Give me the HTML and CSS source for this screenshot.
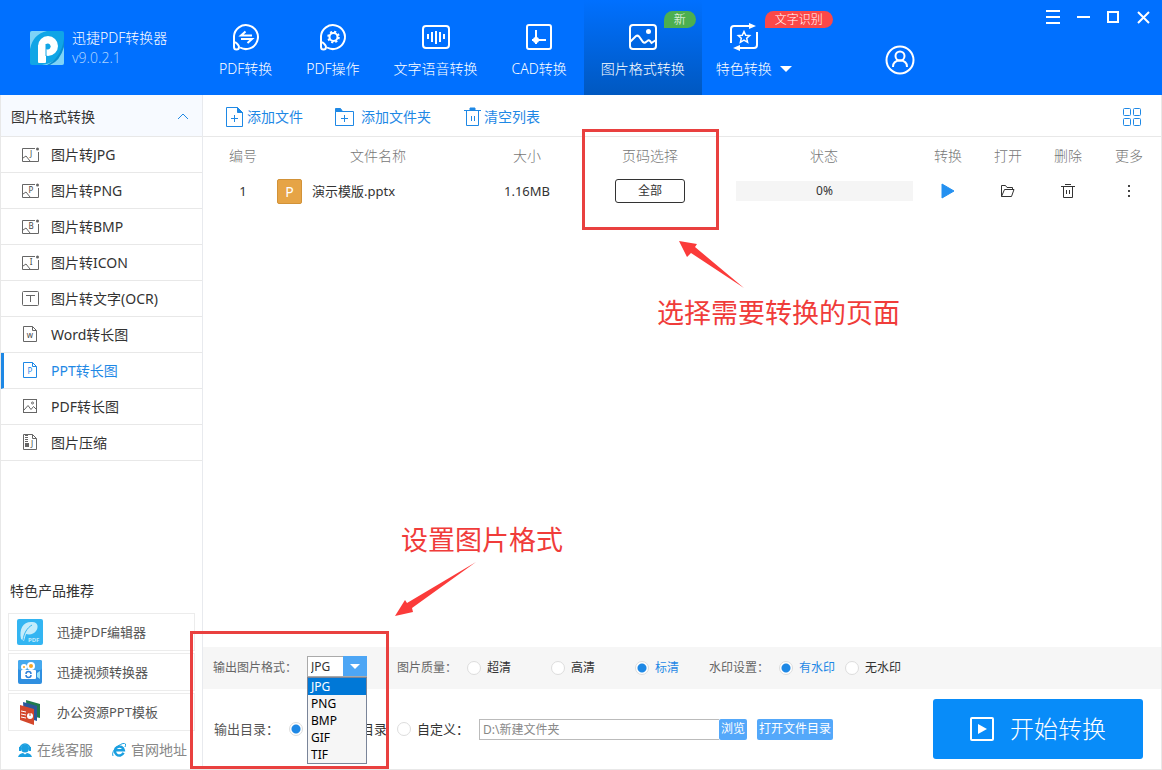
FILE: index.html
```
<!DOCTYPE html>
<html lang="zh-CN">
<head>
    <meta charset="UTF-8">
    <meta name="viewport" content="width=device-width, initial-scale=1.0">
    <title>迅捷PDF转换器</title>
    <link rel="stylesheet" href="styles.css">
</head>
<body>
    <header class="header">
        <div class="brand">
            <svg class="brand-logo" width="34" height="34" viewBox="0 0 34 34">
                <rect width="34" height="34" rx="2" fill="#10a5e6"/>
                <path d="M0 18V2Q0 0 2 0H17Q3 3 0 18Z" fill="#7fd3f7"/>
                <path d="M34 12V32Q34 34 32 34H12Q31 31 34 12Z" fill="#7fd3f7"/>
                <path d="M17 34Q31 27 34 8V16Q30 30 20 34Z" fill="#0a8fd0"/>
                <rect x="8" y="14" width="8" height="18" rx="1" fill="#fff"/>
                <circle cx="18" cy="15" r="10" fill="#fff"/>
                <path d="M16 13a3 3 0 1 1 0 5Z" fill="#10a5e6"/>
                <path d="M16 13V25" stroke="#10a5e6" stroke-width="1"/>
            </svg>
            <div>
                <h1 class="brand-name">迅捷PDF转换器</h1>
                <p class="brand-version">v9.0.2.1</p>
            </div>
        </div>

        <nav class="nav">
            <a class="nav-item" href="#">
                <svg class="nav-icon" viewBox="0 0 30 30">
                    <path d="M3 22V14A12 12 0 1 1 9 25.500"/>
                    <path d="M3 16V25a2.500 2.500 0 0 0 5 0Q8 23 4 20"/>
                    <path d="M21 13.500H10L14.500 9.500M10 17H21L16.500 21"/>
                </svg>
                <span>PDF转换</span>
            </a>
            <a class="nav-item" href="#">
                <svg class="nav-icon" viewBox="0 0 30 30">
                    <path d="M3 22V14A12 12 0 1 1 9 25.500"/>
                    <path d="M3 16V25a2.500 2.500 0 0 0 5 0Q8 23 4 20"/>
                    <circle cx="15.500" cy="15" r="4"/>
                    <circle cx="15.500" cy="15" r="5.300" stroke-dasharray="2.100 2.060"/>
                </svg>
                <span>PDF操作</span>
            </a>
            <a class="nav-item" href="#">
                <svg class="nav-icon" viewBox="0 0 30 30">
                    <rect x="2" y="4" width="26" height="22" rx="3"/>
                    <path d="M7 12V17M11 10V20M15 9V22M19 10V20M23 12V17"/>
                </svg>
                <span>文字语音转换</span>
            </a>
            <a class="nav-item" href="#">
                <svg class="nav-icon" viewBox="0 0 30 30">
                    <rect x="3" y="3" width="24" height="24" rx="2"/>
                    <path d="M12 8V22M8 18H22"/>
                    <circle cx="12" cy="18" r="2" fill="currentColor"/>
                </svg>
                <span>CAD转换</span>
            </a>
            <a class="nav-item active" href="#">
                <svg class="nav-icon" viewBox="0 0 30 30">
                    <rect x="2" y="3" width="26" height="24" rx="3"/>
                    <path d="M2 20L8 14Q9.500 13 11 14.500L15 20Q16.500 21.500 18 20L20 18.500Q21 18 22 19L23.500 21L28 18"/>
                    <circle cx="20.500" cy="9.500" r="2.500" fill="currentColor" stroke="none"/>
                </svg>
                <span>图片格式转换</span>
                <em class="badge badge-new">新</em>
            </a>
            <a class="nav-item nav-more" href="#">
                <svg class="nav-icon" viewBox="0 0 30 30">
                    <path d="M2 21V7Q2 4 5 4H22M28 10V23Q28 26 25 26H8"/>
                    <path d="M20 1L27 4L20 7ZM11 23L4 26L11 29Z" fill="currentColor" stroke="none"/>
                    <path d="M15 9.500L16.700 13.200L20.700 13.600L17.700 16.300L18.600 20.300L15 18.200L11.400 20.300L12.300 16.300L9.300 13.600L13.300 13.200Z" stroke-width="1.500"/>
                </svg>
                <span class="nav-label">特色转换</span>
                <svg class="nav-caret" width="12" height="6" viewBox="0 0 12 6"><path d="M0 0H12L6 6Z" fill="currentColor"/></svg>
                <em class="badge badge-ocr">文字识别</em>
            </a>
        </nav>

        <button class="user-btn" type="button" aria-label="用户">
            <svg width="30" height="30" viewBox="0 0 30 30">
                <circle cx="15" cy="15" r="13.500"/>
                <circle cx="15" cy="11" r="4.500"/>
                <path d="M8 22Q8 15.500 15 15.500T22 22"/>
            </svg>
        </button>

        <div class="window-controls">
            <button type="button" aria-label="菜单"><svg viewBox="0 0 14 14"><path d="M0 1H14M0 7H14M0 13H14"/></svg></button>
            <button type="button" aria-label="最小化"><svg viewBox="0 0 14 14"><path d="M1 7H14"/></svg></button>
            <button type="button" aria-label="最大化"><svg viewBox="0 0 14 14"><path d="M2 2H12V12H2Z"/></svg></button>
            <button type="button" aria-label="关闭"><svg viewBox="0 0 14 14"><path d="M2 2L13 13M13 2L2 13"/></svg></button>
        </div>
    </header>

    <div class="layout">
        <aside class="sidebar">
            <button class="menu-title" type="button">
                <span>图片格式转换</span>
                <svg width="12" height="8" viewBox="0 0 12 8"><path d="M1 6L6 1L11 6" fill="none" stroke="#1e88e5"/></svg>
            </button>
            <nav class="menu">
                <a class="menu-item" href="#">
                    <svg class="menu-icon" viewBox="0 0 18 18"><path d="M13 2.500H.5V15.500H16.500V6M1 12L4 10L8 15"/><circle cx="15.500" cy="3" r="1.500" class="dot"/><text x="9" y="11">J</text></svg>
                    图片转JPG
                </a>
                <a class="menu-item" href="#">
                    <svg class="menu-icon" viewBox="0 0 18 18"><path d="M13 2.500H.5V15.500H16.500V6M1 12L4 10L8 15"/><circle cx="15.500" cy="3" r="1.500" class="dot"/><text x="9" y="11">P</text></svg>
                    图片转PNG
                </a>
                <a class="menu-item" href="#">
                    <svg class="menu-icon" viewBox="0 0 18 18"><path d="M13 2.500H.5V15.500H16.500V6M1 12L4 10L8 15"/><circle cx="15.500" cy="3" r="1.500" class="dot"/><text x="9" y="11">B</text></svg>
                    图片转BMP
                </a>
                <a class="menu-item" href="#">
                    <svg class="menu-icon" viewBox="0 0 18 18"><path d="M13 2.500H.5V15.500H16.500V6M1 12L4 10L8 15"/><circle cx="15.500" cy="3" r="1.500" class="dot"/><text x="9" y="11">I</text></svg>
                    图片转ICON
                </a>
                <a class="menu-item" href="#">
                    <svg class="menu-icon" viewBox="0 0 18 18"><rect x=".5" y="1.500" width="16" height="14" rx="1"/><path d="M4 5.500H13M8.500 5.500V12"/></svg>
                    图片转文字(OCR)
                </a>
                <a class="menu-item" href="#">
                    <svg class="menu-icon" viewBox="0 0 18 18"><path d="M1.500.5H10.500L14.500 4.500V15.500H1.500ZM10.500.5V4.500H14.500"/><text x="8" y="12">w</text></svg>
                    Word转长图
                </a>
                <a class="menu-item active" href="#">
                    <svg class="menu-icon" viewBox="0 0 18 18"><path d="M1.500.5H10.500L14.500 4.500V15.500H1.500ZM10.500.5V4.500H14.500"/><text x="8" y="12">P</text></svg>
                    PPT转长图
                </a>
                <a class="menu-item" href="#">
                    <svg class="menu-icon" viewBox="0 0 18 18"><rect x="1.500" y="1.500" width="13" height="13"/><path d="M2 12L6 7.500L9 11.500L11.500 8.500L14 11"/><circle cx="10.500" cy="5" r="1"/></svg>
                    PDF转长图
                </a>
                <a class="menu-item" href="#">
                    <svg class="menu-icon" viewBox="0 0 18 18"><path d="M1.500.5H10.500L14.500 4.500V15.500H1.500ZM10.500.5V4.500H14.500"/><path d="M4.500 1V9" stroke-width="3" stroke-dasharray="1 1"/><rect x="3" y="9" width="4" height="4" class="dot"/><text x="10" y="13">J</text></svg>
                    图片压缩
                </a>
            </nav>

            <section class="products">
                <h2 class="products-title">特色产品推荐</h2>
                <a class="product" href="#">
                    <svg width="26" height="26" viewBox="0 0 26 26">
                        <rect width="26" height="26" rx="2" fill="#33b5f2"/>
                        <path d="M4 20C2 10 6 3 14 3C21 2 22 8 19 12C17 15 13 16 9 15L7 22Z" fill="#c4ecfb"/>
                        <path d="M6 21C7 14 10 9 15 6" fill="none" stroke="#33b5f2"/>
                        <text x="11" y="23" font-size="6" font-weight="bold" fill="#bfe8fb">PDF</text>
                    </svg>
                    迅捷PDF编辑器
                </a>
                <a class="product" href="#">
                    <svg width="26" height="26" viewBox="0 0 26 26">
                        <rect x="1" y="1" width="24" height="24" rx="2" fill="#2f8fe0"/>
                        <rect x="1" y="1" width="24" height="10" rx="2" fill="#45a9ee"/>
                        <circle cx="7" cy="8" r="3" fill="#fff"/><circle cx="14" cy="7" r="4" fill="#fff"/>
                        <circle cx="7" cy="8" r="1" fill="#f5a623"/><circle cx="14" cy="7" r="2" fill="#f5a623"/>
                        <rect x="4" y="11" width="15" height="9" rx="1" fill="#fff"/>
                        <path d="M20 14L23 12V20L20 18Z" fill="#9fe3fa"/>
                        <path d="M9 15A2.500 2.500 0 0 1 14 15M14 16A2.500 2.500 0 0 1 9 16" fill="none" stroke="#2f80d8" stroke-width="1.500"/>
                    </svg>
                    迅捷视频转换器
                </a>
                <a class="product" href="#">
                    <svg width="26" height="26" viewBox="0 0 26 26">
                        <path d="M9 1L23 5V19L10 16Z" fill="#1f7a4d"/>
                        <path d="M6 3L20 7V22L7 18Z" fill="#2b579a"/>
                        <path d="M3 6L17 10V26L3 21Z" fill="#d3472b"/>
                        <path d="M4 12L9 13M4 15L9 16M4 18L9 19" stroke="#fff"/>
                        <circle cx="13" cy="17" r="3" fill="#fff"/>
                        <path d="M13 17V13" stroke="#d3472b"/>
                    </svg>
                    办公资源PPT模板
                </a>
                <div class="support">
                    <a href="#">
                        <svg width="14" height="14" viewBox="0 0 14 14">
                            <circle cx="7" cy="5.500" r="4" fill="#1a9fe0"/>
                            <path d="M2 6A5 5 0 0 1 12 6" fill="none" stroke="#1a9fe0" stroke-width="1.500"/>
                            <rect x="1" y="4" width="2" height="4" fill="#1a9fe0"/><rect x="11" y="4" width="2" height="4" fill="#1a9fe0"/>
                            <path d="M0 14Q1 10.500 5 10L7 11.500L9 10Q13 10.500 14 14Z" fill="#1a9fe0"/>
                        </svg>
                        在线客服
                    </a>
                    <a href="#">
                        <svg width="14" height="14" viewBox="0 0 14 14">
                            <path d="M11.500 9.800A4.500 4.500 0 1 1 11.800 7.300H4" fill="none" stroke="#1a9fe0" stroke-width="2.500"/>
                            <path d="M1 13Q-1 9 6 3Q12-1 13.500 1Q14 2 13 4" fill="none" stroke="#1a9fe0"/>
                        </svg>
                        官网地址
                    </a>
                </div>
            </section>
        </aside>

        <main class="main">
            <div class="toolbar">
                <button class="tool" type="button">
                    <svg width="18" height="20" viewBox="0 0 18 20"><path d="M.5.5H11.500L16.500 5.500V19.500H.5ZM5 11.500H12M8.500 8V15"/><path d="M11.500.5V5.500H16.500Z" fill="currentColor"/></svg>
                    添加文件
                </button>
                <button class="tool tool-folder" type="button">
                    <svg width="19" height="18" viewBox="0 0 19 18"><path d="M.5 3.500H18.500V17.500H.5ZM6 10.500H13M9.500 7V14"/><path d="M.5.5H5.500L7.500 3.500H.5Z" fill="currentColor"/></svg>
                    添加文件夹
                </button>
                <button class="tool" type="button">
                    <svg width="18" height="20" viewBox="0 0 18 20"><path d="M1 3.500H18M3.500 4V18.500H15.500V4M8.500 9V14M11.500 9V14"/><path d="M7 1H12V3H7Z" fill="currentColor"/></svg>
                    清空列表
                </button>
                <button class="tool tool-grid" type="button" aria-label="网格视图">
                    <svg width="18" height="18" viewBox="0 0 18 18"><rect x=".5" y=".5" width="7" height="7" rx="1"/><rect x="10.500" y=".5" width="7" height="7" rx="1"/><rect x=".5" y="10.500" width="7" height="7" rx="1"/><rect x="10.500" y="10.500" width="7" height="7" rx="1"/></svg>
                </button>
            </div>

            <table class="files">
                <thead>
                    <tr>
                        <th class="col-no">编号</th>
                        <th class="col-name">文件名称</th>
                        <th class="col-size">大小</th>
                        <th class="col-pages">页码选择</th>
                        <th class="col-status">状态</th>
                        <th class="col-run">转换</th>
                        <th class="col-open">打开</th>
                        <th class="col-delete">删除</th>
                        <th class="col-more">更多</th>
                    </tr>
                </thead>
                <tbody>
                    <tr>
                        <td class="col-no">1</td>
                        <td class="col-name">
                            <div class="file">
                                <span class="file-type">P</span>
                                <span>演示模版.pptx</span>
                            </div>
                        </td>
                        <td>1.16MB</td>
                        <td class="pages-cell">
                            <button class="pages-btn" type="button">全部</button>
                            <div class="mark mark-pages"></div>
                            <svg class="arrow arrow-pages" width="66" height="48" viewBox="0 0 66 48"><path d="M0 0L18 3L16 6L65 47L12 12L8 16Z"/></svg>
                            <p class="note note-pages">选择需要转换的页面</p>
                        </td>
                        <td><div class="progress">0%</div></td>
                        <td>
                            <button class="row-btn" type="button" aria-label="转换"><svg width="14" height="16" viewBox="0 0 14 16"><path d="M1 1L13 8L1 15Z" fill="#2490f0" stroke="#2490f0" stroke-linejoin="round"/></svg></button>
                        </td>
                        <td>
                            <button class="row-btn" type="button" aria-label="打开"><svg width="16" height="16" viewBox="0 0 16 16"><path d="M1.500 13.500V2.500H5.500L7 4.500H12.500V6.500M1.500 13.500L4.500 6.500H14L11.500 13.500Z"/></svg></button>
                        </td>
                        <td>
                            <button class="row-btn" type="button" aria-label="删除"><svg width="14" height="16" viewBox="0 0 14 16"><path d="M4 1.500H10M0 3.500H14M2.500 4V14.500H11.500V4M5.500 7V11M8.500 7V11"/></svg></button>
                        </td>
                        <td class="col-more">
                            <button class="row-btn" type="button" aria-label="更多"><svg width="4" height="16" viewBox="0 0 4 16"><path d="M1 2H3V4H1ZM1 7H3V9H1ZM1 12H3V14H1Z" fill="#444" stroke="none"/></svg></button>
                        </td>
                    </tr>
                </tbody>
            </table>

            <form class="settings">
                <div class="format-bar">
                    <label for="format">输出图片格式：</label>
                    <div class="dropdown">
                        <select class="dropdown-select" id="format">
                            <option>JPG</option>
                            <option>PNG</option>
                            <option>BMP</option>
                            <option>GIF</option>
                            <option>TIF</option>
                        </select>
                        <svg class="dropdown-arrow" width="24" height="20" viewBox="0 0 24 20"><path d="M7 8H17L12 13Z" fill="#fff"/></svg>
                        <ul class="dropdown-list" role="listbox" aria-label="输出图片格式">
                            <li role="option" aria-selected="true">JPG</li>
                            <li role="option" aria-selected="false">PNG</li>
                            <li role="option" aria-selected="false">BMP</li>
                            <li role="option" aria-selected="false">GIF</li>
                            <li role="option" aria-selected="false">TIF</li>
                        </ul>
                    </div>
                    <div class="group group-quality" role="radiogroup" aria-labelledby="quality-label">
                        <span id="quality-label">图片质量：</span>
                        <div class="options">
                            <label class="radio"><input type="radio" name="quality"><span>超清</span></label>
                            <label class="radio"><input type="radio" name="quality"><span>高清</span></label>
                            <label class="radio"><input type="radio" name="quality" checked><span>标清</span></label>
                        </div>
                    </div>
                    <div class="group" role="radiogroup" aria-labelledby="watermark-label">
                        <span id="watermark-label">水印设置：</span>
                        <label class="radio"><input type="radio" name="watermark" checked><span>有水印</span></label>
                        <label class="radio"><input type="radio" name="watermark"><span>无水印</span></label>
                    </div>
                </div>

                <div class="output-bar">
                    <span>输出目录：</span>
                    <label class="radio radio-plain radio-source"><input type="radio" name="output" checked><span>目录</span></label>
                    <label class="radio radio-plain"><input type="radio" name="output"><span>自定义：</span></label>
                    <div class="path">
                        <input class="path-input" type="text" value="D:\新建文件夹" aria-label="自定义目录">
                        <button class="small-btn" type="button">浏览</button>
                    </div>
                    <button class="small-btn" type="button">打开文件目录</button>
                    <button class="start-btn" type="button">
                        <svg width="24" height="24" viewBox="0 0 24 24"><rect x="1" y="1" width="22" height="22" rx="1" fill="none" stroke="#fff" stroke-width="2"/><path d="M8 7L17 12L8 17Z" fill="#fff"/></svg>
                        开始转换
                    </button>
                </div>

                <div class="mark mark-format"></div>
                <svg class="arrow arrow-format" width="82" height="55" viewBox="0 0 82 55"><path d="M0 54L10 38L12 41L81 0L17 46L18 50Z"/></svg>
                <p class="note note-format">设置图片格式</p>
            </form>
        </main>
    </div>
</body>
</html>
```
FILE: styles.css
```
* {
    margin: 0;
    padding: 0;
    box-sizing: border-box;
}

body {
    display: flex;
    flex-direction: column;
    min-height: 100vh;
    font-family: "Noto Sans", "Noto Sans CJK SC", sans-serif;
    font-size: 14px;
    line-height: 20px;
    color: #333;
    background: #fff;
}

button,
input,
select {
    font: inherit;
    color: inherit;
}

button {
    background: none;
    border: none;
    cursor: pointer;
}

a {
    color: inherit;
    text-decoration: none;
}

svg {
    flex: none;
}

/* Header */
.header {
    display: flex;
    height: 95px;
    background: #0070ff;
    color: #fff;
    font-weight: 300;
}

.brand {
    display: flex;
    align-items: center;
    gap: 8px;
    width: 202px;
    padding-left: 30px;
}

.brand-name {
    font-size: 14px;
    font-weight: 300;
}

.brand-version {
    color: #a6d0ff;
}

.nav {
    display: flex;
}

.nav-item {
    position: relative;
    display: grid;
    justify-items: center;
    align-content: start;
    gap: 7px;
    padding: 22px 17px 0;
    white-space: nowrap;
}

.nav-item.active {
    background: linear-gradient(#0070ff, #0058c0);
}

.nav-icon {
    width: 30px;
    height: 30px;
    fill: none;
    stroke: currentColor;
    stroke-width: 2;
}

.nav-more {
    grid-template-columns: auto auto;
    align-items: center;
    column-gap: 8px;
    padding-left: 14px;
}

.nav-label {
    grid-row: 2;
    grid-column: 1;
}

.nav-caret {
    grid-row: 2;
    grid-column: 2;
}

.badge {
    position: absolute;
    top: 11px;
    height: 17px;
    font-size: 12px;
    font-style: normal;
    line-height: 17px;
    text-align: center;
    border-radius: 9px 9px 9px 0;
}

.badge-new {
    right: 6px;
    width: 32px;
    background: #4caf50;
}

.badge-ocr {
    left: 63px;
    width: 68px;
    background: #fb4848;
}

.user-btn {
    align-self: center;
    height: 30px;
    margin: 24px 0 0 76px;
}

.user-btn svg {
    fill: none;
    stroke: #fff;
    stroke-width: 2;
}

.window-controls {
    display: flex;
    gap: 16px;
    margin-left: auto;
    padding: 10px 12px 0 0;
}

.window-controls button {
    width: 14px;
    height: 14px;
}

.window-controls svg {
    display: block;
    fill: none;
    stroke: #fff;
    stroke-width: 2;
}

/* Layout */
.layout {
    flex: 1;
    display: flex;
    border: 1px solid #e8e8e8;
    border-top: none;
}

.sidebar {
    display: flex;
    flex-direction: column;
    width: 202px;
    border-right: 1px solid #e8eaee;
}

.menu-title {
    display: flex;
    align-items: center;
    justify-content: space-between;
    height: 42px;
    padding: 2px 13px 0 10px;
    background: #f7faff;
    border-bottom: 1px solid #e8e8e8;
}

.menu-item {
    display: flex;
    align-items: center;
    gap: 11px;
    height: 36px;
    padding: 1px 0 0 21px;
    border-bottom: 1px solid #e8e8e8;
}

.menu-item.active {
    padding-left: 18px;
    color: #1e88e5;
    border-left: 3px solid #1e88e5;
}

.menu-icon {
    width: 18px;
    height: 18px;
    fill: none;
    stroke: #666;
}

.menu-icon text {
    font-size: 8px;
    text-anchor: middle;
    fill: #444;
    stroke: none;
}

.menu-icon .dot {
    fill: #666;
    stroke: none;
}

.menu-item.active .menu-icon {
    stroke: #1e88e5;
}

.menu-item.active text {
    fill: #1e88e5;
}

.products {
    display: grid;
    gap: 2px;
    margin-top: auto;
    padding: 0 7px 9px;
}

.products-title {
    padding: 0 2px 10px;
    font-size: 14px;
    font-weight: 400;
}

.product {
    display: flex;
    align-items: center;
    gap: 14px;
    height: 38px;
    padding-left: 8px;
    font-size: 13px;
    color: #555;
    border: 1px solid #ececec;
}

.support {
    display: flex;
    justify-content: space-between;
    padding: 7px 8px 0 10px;
    color: #888;
}

.support a {
    display: flex;
    align-items: center;
    gap: 5px;
}

/* Main */
.main {
    flex: 1;
    display: flex;
    flex-direction: column;
    min-width: 0;
}

.toolbar {
    display: flex;
    align-items: center;
    gap: 32px;
    height: 42px;
    padding: 2px 20px 0 23px;
    border-bottom: 1px solid #e8e8e8;
}

.tool {
    display: flex;
    align-items: center;
    gap: 3px;
    color: #1e88e5;
}

.tool-folder {
    gap: 7px;
}

.tool-grid {
    margin-left: auto;
}

.tool svg {
    fill: none;
    stroke: currentColor;
}

.files {
    width: 100%;
    table-layout: fixed;
    border-collapse: collapse;
    text-align: center;
}

.files th {
    height: 38px;
    font-weight: 300;
    color: #777;
}

.files td {
    height: 32px;
    font-size: 13px;
}

.col-no {
    width: 74px;
    padding-left: 6px;
}

.col-size {
    width: 96px;
}

.col-pages {
    width: 150px;
}

.col-status {
    width: 198px;
}

.col-run,
.col-delete {
    width: 50px;
}

.col-open {
    width: 70px;
}

.col-more {
    width: 68px;
    padding-left: 4px;
}

.file {
    display: flex;
    align-items: center;
    gap: 10px;
}

.file-type {
    width: 25px;
    height: 25px;
    font-size: 14px;
    line-height: 23px;
    color: #fff;
    background: #e6a446;
    border: 1px solid #d29238;
    border-radius: 2px;
}

.pages-cell {
    position: relative;
}

.pages-btn {
    width: 70px;
    height: 24px;
    font-size: 12px;
    line-height: 22px;
    border: 1px solid #333;
    border-radius: 3px;
}

.progress {
    margin: 0 10px 0 11px;
    font-size: 12px;
    background: #f5f5f5;
}

.row-btn {
    display: block;
    height: 16px;
    margin: 0 auto;
}

.row-btn svg {
    display: block;
    fill: none;
    stroke: #333;
}

/* Output settings */
.settings {
    position: relative;
    margin-top: auto;
}

.format-bar {
    display: flex;
    align-items: center;
    gap: 10px;
    height: 42px;
    padding-left: 10px;
    font-size: 12px;
    color: #666;
    background: #f6f6f6;
}

.dropdown {
    position: relative;
    width: 60px;
    margin-bottom: 3px;
}

.dropdown-select {
    display: block;
    width: 100%;
    height: 21px;
    padding-left: 3px;
    color: #333;
    background: #fff;
    border: 1px solid #aaa;
    border-radius: 0;
    appearance: none;
}

.dropdown-arrow {
    position: absolute;
    top: 0;
    right: 0;
    background: #4da6f5;
    pointer-events: none;
}

.dropdown-list {
    position: absolute;
    top: 100%;
    left: 0;
    z-index: 1;
    width: 100%;
    line-height: 17px;
    color: #000;
    list-style: none;
    background: #f6f6f6;
    border: 1px solid #7a8599;
}

.dropdown-list li {
    padding-left: 3px;
}

.dropdown-list [aria-selected="true"] {
    color: #fff;
    background: #0078d7;
}

.group {
    display: flex;
    align-items: center;
    gap: 10px;
}

.group-quality {
    margin: 0 20px;
}

.options {
    display: flex;
    gap: 40px;
}

.radio {
    display: flex;
    align-items: center;
    gap: 6px;
    color: #333;
}

.radio input {
    width: 14px;
    height: 14px;
    background: #fff;
    border: 1px solid #ddd;
    border-radius: 50%;
    appearance: none;
}

.radio input:checked {
    background: radial-gradient(circle, #1e88e5 4px, #fff 5px);
}

.radio input:checked + span {
    color: #1e88e5;
}

.radio-plain input:checked + span {
    color: #333;
}

.output-bar {
    display: flex;
    align-items: center;
    gap: 10px;
    height: 80px;
    padding: 0 18px 0 11px;
    font-size: 13px;
    color: #555;
    white-space: nowrap;
}

.radio-plain {
    gap: 6px;
}

.radio-source {
    justify-content: space-between;
    width: 98px;
}

.path {
    display: flex;
}

.path-input {
    width: 240px;
    height: 21px;
    padding: 0 3px;
    font-size: 12px;
    color: #888;
    border: 1px solid #bbb;
    border-right: none;
}

.small-btn {
    height: 21px;
    padding: 0 2px;
    font-size: 12px;
    color: #fff;
    background: #54a8fa;
    border-radius: 2px;
}

.start-btn {
    display: flex;
    align-items: center;
    justify-content: center;
    gap: 16px;
    width: 210px;
    height: 60px;
    margin-left: auto;
    font-size: 24px;
    font-weight: 300;
    color: #fff;
    background: #088cf9;
    border-radius: 3px;
}

/* Red marks and notes drawn over the window */
.mark,
.arrow,
.note {
    position: absolute;
    z-index: 2;
    pointer-events: none;
}

.mark {
    border: 3px solid #e9403f;
}

.arrow {
    fill: #fb3b3a;
}

.note {
    font-size: 27px;
    line-height: 36px;
    color: #f03c3a;
    white-space: nowrap;
}

.mark-pages {
    top: -46px;
    left: 7px;
    width: 137px;
    height: 101px;
}

.arrow-pages {
    top: 66px;
    left: 104px;
}

.note-pages {
    top: 120px;
    left: 82px;
}

.mark-format {
    top: -16px;
    bottom: 0;
    left: -13px;
    width: 199px;
}

.arrow-format {
    top: -85px;
    left: 192px;
}

.note-format {
    top: -125px;
    left: 198px;
}
```
